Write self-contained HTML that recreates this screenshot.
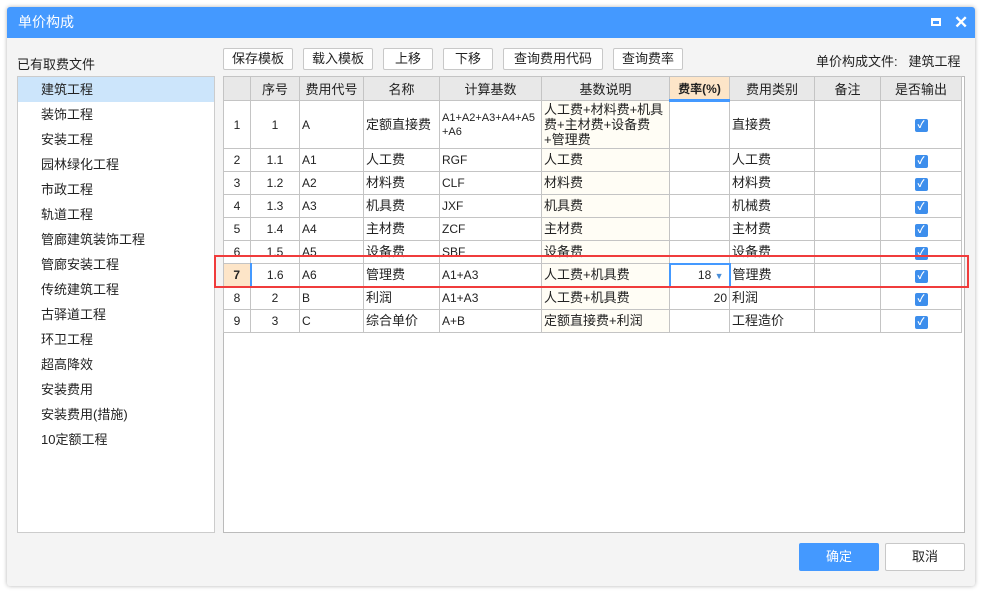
<!DOCTYPE html>
<html><head><meta charset="utf-8"><style>
*{margin:0;padding:0;box-sizing:border-box}
body{width:982px;height:594px;background:#fff;position:relative;overflow:hidden;font-family:"Liberation Sans","Noto Sans CJK SC",sans-serif;font-size:13px;color:#222}
.a{position:absolute}
.win{left:7px;top:7px;width:968px;height:579px;background:#f4f4f4;box-shadow:0 0 4px rgba(0,0,0,.3);border-radius:3px}
.title{left:7px;top:7px;width:968px;height:31px;background:#4499ff;color:#fff;font-size:14px;line-height:31px;padding-left:11px;border-radius:3px 3px 0 0}
.btn{position:absolute;top:48px;height:22px;border:1px solid #c8c8c8;background:#fff;border-radius:2px;text-align:center;line-height:20px;font-size:13px}
.list{left:17px;top:76px;width:198px;height:457px;background:#fff;border:1px solid #ccc}
.list div{height:25px;line-height:25px;padding-left:23px;font-size:13px}
.tbl{left:223px;top:76px;width:742px;height:457px;background:#fff;border:1px solid #bbb}
table{border-collapse:collapse;position:absolute;left:223px;top:76px;table-layout:fixed;width:738px}
td{border:1px solid #c4c4c4;font-size:12px;padding:0 2px;overflow:hidden;white-space:nowrap;line-height:14px}
th{border:1px solid #c4c4c4;background:#e8e8e8;font-weight:normal;font-size:13px;height:24px;overflow:hidden;white-space:nowrap}
.c{text-align:center}.y{background:#fffdf5}
.chk{display:inline-block;width:13px;height:13px;background:#3d8eec;border-radius:2px;color:#fff;font-size:10px;line-height:13px;text-align:center;font-weight:bold}
</style></head><body>
<div class="a win"></div>
<div class="a title">单价构成
<span class="a" style="left:924px;top:11px;width:10px;height:8px;border:2px solid #fff;border-top-width:3px"></span>
<span class="a" style="left:947px;top:0;font-size:17px;font-weight:bold">✕</span></div>
<div class="a" style="left:17px;top:54px">已有取费文件</div>
<div class="btn" style="left:223px;width:70px">保存模板</div>
<div class="btn" style="left:303px;width:70px">载入模板</div>
<div class="btn" style="left:383px;width:50px">上移</div>
<div class="btn" style="left:443px;width:50px">下移</div>
<div class="btn" style="left:503px;width:100px">查询费用代码</div>
<div class="btn" style="left:613px;width:70px">查询费率</div>
<div class="a" style="left:816px;top:51px">单价构成文件:&nbsp;&nbsp;&nbsp;建筑工程</div>
<div class="a list"><div style="background:#cce5fb">建筑工程</div><div>装饰工程</div><div>安装工程</div><div>园林绿化工程</div><div>市政工程</div><div>轨道工程</div><div>管廊建筑装饰工程</div><div>管廊安装工程</div><div>传统建筑工程</div><div>古驿道工程</div><div>环卫工程</div><div>超高降效</div><div>安装费用</div><div>安装费用(措施)</div><div>10定额工程</div></div>
<div class="a tbl"></div>
<table>
<colgroup><col style="width:27px"><col style="width:49px"><col style="width:64px"><col style="width:76px"><col style="width:102px"><col style="width:128px"><col style="width:60px"><col style="width:85px"><col style="width:66px"><col style="width:81px"></colgroup>
<tr><th></th><th>序号</th><th>费用代号</th><th>名称</th><th>计算基数</th><th>基数说明</th><th style="background:#fde5c8;font-weight:bold;border-bottom:3px solid #4499ff;font-size:12px">费率(%)</th><th>费用类别</th><th>备注</th><th>是否输出</th></tr>
<tr style="height:48px"><td class="c">1</td><td class="c">1</td><td>A</td><td style="font-size:13px">定额直接费</td><td style="white-space:normal;word-break:break-all;font-size:11px">A1+A2+A3+A4+A5+A6</td><td class="y" style="white-space:normal;word-break:break-all;font-size:13px;line-height:15px">人工费+材料费+机具费+主材费+设备费+管理费</td><td></td><td style="font-size:13px">直接费</td><td></td><td class="c"><span class="chk">✓</span></td></tr>
<tr style="height:23px"><td class="c">2</td><td class="c">1.1</td><td>A1</td><td style="font-size:13px">人工费</td><td>RGF</td><td class="y" style="font-size:13px">人工费</td><td></td><td style="font-size:13px">人工费</td><td></td><td class="c"><span class="chk">✓</span></td></tr>
<tr style="height:23px"><td class="c">3</td><td class="c">1.2</td><td>A2</td><td style="font-size:13px">材料费</td><td>CLF</td><td class="y" style="font-size:13px">材料费</td><td></td><td style="font-size:13px">材料费</td><td></td><td class="c"><span class="chk">✓</span></td></tr>
<tr style="height:23px"><td class="c">4</td><td class="c">1.3</td><td>A3</td><td style="font-size:13px">机具费</td><td>JXF</td><td class="y" style="font-size:13px">机具费</td><td></td><td style="font-size:13px">机械费</td><td></td><td class="c"><span class="chk">✓</span></td></tr>
<tr style="height:23px"><td class="c">5</td><td class="c">1.4</td><td>A4</td><td style="font-size:13px">主材费</td><td>ZCF</td><td class="y" style="font-size:13px">主材费</td><td></td><td style="font-size:13px">主材费</td><td></td><td class="c"><span class="chk">✓</span></td></tr>
<tr style="height:23px"><td class="c">6</td><td class="c">1.5</td><td>A5</td><td style="font-size:13px">设备费</td><td>SBF</td><td class="y" style="font-size:13px">设备费</td><td></td><td style="font-size:13px">设备费</td><td></td><td class="c"><span class="chk">✓</span></td></tr>
<tr style="height:23px"><td class="c" style="background:#fde5c8;font-weight:bold;border-right:2px solid #4499ff">7</td><td class="c">1.6</td><td>A6</td><td style="font-size:13px">管理费</td><td>A1+A3</td><td class="y" style="font-size:13px">人工费+机具费</td><td style="text-align:right;border:2px solid #4499ff;padding-right:5px">18 <span style="color:#4a8ed8;font-size:9px">▼</span></td><td style="font-size:13px">管理费</td><td></td><td class="c"><span class="chk">✓</span></td></tr>
<tr style="height:23px"><td class="c">8</td><td class="c">2</td><td>B</td><td style="font-size:13px">利润</td><td>A1+A3</td><td class="y" style="font-size:13px">人工费+机具费</td><td style="text-align:right">20</td><td style="font-size:13px">利润</td><td></td><td class="c"><span class="chk">✓</span></td></tr>
<tr style="height:23px"><td class="c">9</td><td class="c">3</td><td>C</td><td style="font-size:13px">综合单价</td><td>A+B</td><td class="y" style="font-size:13px">定额直接费+利润</td><td></td><td style="font-size:13px">工程造价</td><td></td><td class="c"><span class="chk">✓</span></td></tr>
</table>
<div class="a" style="left:214px;top:255px;width:755px;height:33px;border:2px solid #f03c3c"></div>
<div class="a" style="left:799px;top:543px;width:80px;height:28px;background:#4499ff;color:#fff;text-align:center;line-height:28px;border-radius:2px">确定</div>
<div class="a" style="left:885px;top:543px;width:80px;height:28px;background:#fff;border:1px solid #c8c8c8;text-align:center;line-height:26px;border-radius:2px">取消</div>
</body></html>
